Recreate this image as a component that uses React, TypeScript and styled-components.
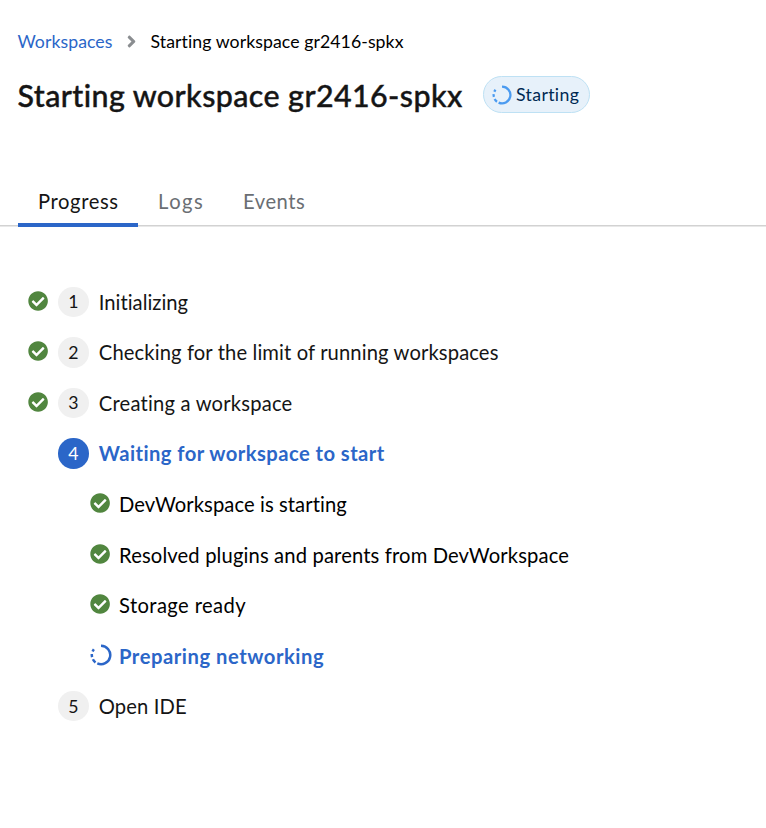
import React from 'react';
import styled, { createGlobalStyle } from 'styled-components';
import { FaAngleRight, FaCheckCircle } from 'react-icons/fa';

const GlobalStyle = createGlobalStyle`
  *, *::before, *::after { box-sizing: border-box; }
  html { background: #fff; }
  body {
    margin: 0;
    font-family: Lato, 'Open Sans', sans-serif;
    font-variant-ligatures: none;
    color: #151515;
    overflow-x: hidden;
  }
`;

const Page = styled.main`
  min-height: 828px;
  background: #fff;
`;

const Header = styled.header`
  padding: 27px 17.5px 0;
`;

const Breadcrumb = styled.nav`
  display: flex;
  align-items: center;
  height: 28px;
  font-size: 17.7px;
  white-space: nowrap;
`;

const BreadcrumbLink = styled.a`
  width: 95px;
  color: #2b66c8;
  letter-spacing: 0.05px;
  text-decoration: none;
`;

const Divider = styled(FaAngleRight)`
  width: 19px;
  height: 19px;
  margin: 0 10px 0 9px;
  color: #8a8d90;
`;

const BreadcrumbCurrent = styled.span`
  color: #000;
  letter-spacing: 0.07px;
`;

const TitleRow = styled.div`
  display: flex;
  align-items: center;
  height: 37px;
  margin-top: 21px;
`;

const Title = styled.h1`
  width: 465.5px;
  margin: 0;
  font-size: 30.4px;
  font-weight: 500;
  line-height: 38px;
  letter-spacing: 0.41px;
  white-space: nowrap;
  -webkit-text-stroke: 0.4px currentColor;
`;

const StatusLabel = styled.span`
  display: flex;
  align-items: center;
  gap: 4px;
  width: 107px;
  height: 37px;
  padding-left: 8px;
  border: 1.25px solid #bee1f4;
  border-radius: 19px;
  background: #e7f1fa;
  color: #002952;
  font-size: 17.7px;
  letter-spacing: 0.35px;
`;

const Tabs = styled.div`
  display: flex;
  height: 53px;
  margin-top: 60px;
  padding: 0 0 0 18px;
  border-bottom: 1px solid #d2d2d2;
  box-shadow: 0 1px 0 #e8e8e8;
`;

const Tab = styled.button<{ $active?: boolean; $width: number; $spacing: number }>`
  position: relative;
  width: ${(p) => p.$width}px;
  height: 53.5px;
  padding: 6px 0 0 20px;
  border: 0;
  border-bottom: 4px solid ${(p) => (p.$active ? '#2b66c8' : 'transparent')};
  background: none;
  color: ${(p) => (p.$active ? '#151515' : '#6a6e73')};
  font: 400 20.2px/44px Lato, sans-serif;
  letter-spacing: ${(p) => p.$spacing}px;
  text-align: left;
  white-space: nowrap;
`;

const Steps = styled.ol`
  margin: 0;
  padding: 50.5px 0 0 28px;
  list-style: none;
`;

const Step = styled.li<{ $nested?: boolean }>`
  display: flex;
  align-items: center;
  height: 50.55px;
  padding-left: ${(p) => (p.$nested ? 62 : 0)}px;
`;

const StatusSlot = styled.span<{ $nested?: boolean }>`
  display: flex;
  flex: none;
  width: ${(p) => (p.$nested ? 29 : 30.3)}px;
  margin-top: -1.6px;
`;

const CheckIcon = styled(FaCheckCircle)`
  width: 20.2px;
  height: 20.2px;
  color: #51863f;
`;

const Bullet = styled.span<{ $active?: boolean }>`
  display: flex;
  flex: none;
  align-items: center;
  justify-content: center;
  width: 30.4px;
  height: 30.4px;
  margin-right: 10.1px;
  border-radius: 50%;
  background: ${(p) => (p.$active ? '#2b66c8' : '#f0f0f0')};
  color: ${(p) => (p.$active ? '#fff' : '#151515')};
  font-size: 17.7px;
`;

const StepText = styled.span<{ $active?: boolean; $nested?: boolean; $spacing: number }>`
  color: ${(p) => (p.$active ? '#2b66c8' : p.$nested ? '#000' : '#151515')};
  font-size: 20.2px;
  font-weight: ${(p) => (p.$active ? 700 : 400)};
  letter-spacing: ${(p) => p.$spacing}px;
  white-space: nowrap;
`;

const SpinnerSvg = styled.svg<{ $size: number; $color: string }>`
  flex: none;
  width: ${(p) => p.$size}px;
  height: ${(p) => p.$size}px;
  fill: none;
  stroke: ${(p) => p.$color};
  stroke-width: 2.5;
`;

function Spinner({ size, color }: { size: number; color: string }) {
  return (
    <SpinnerSvg viewBox="0 0 22 22" $size={size} $color={color} aria-hidden="true">
      <path d="M11 1.8A9.2 9.2 0 1 1 7.3 19.4" />
      <path d="M5.5 18.4A9.2 9.2 0 0 1 2.9 15.3" />
      <path d="M2.1 13.1A9.2 9.2 0 0 1 1.8 10" />
      <path d="M2.6 7.4A9.2 9.2 0 0 1 3.9 5.2" />
    </SpinnerSvg>
  );
}

interface StepData {
  text: string;
  spacing: number;
  number?: number;
  done?: boolean;
  active?: boolean;
}

const steps: StepData[] = [
  { number: 1, text: 'Initializing', spacing: 0.02, done: true },
  { number: 2, text: 'Checking for the limit of running workspaces', spacing: 0.12, done: true },
  { number: 3, text: 'Creating a workspace', spacing: 0.2, done: true },
  { number: 4, text: 'Waiting for workspace to start', spacing: 0.45, active: true },
  { text: 'DevWorkspace is starting', spacing: 0.08, done: true },
  { text: 'Resolved plugins and parents from DevWorkspace', spacing: 0.14, done: true },
  { text: 'Storage ready', spacing: 0.4, done: true },
  { text: 'Preparing networking', spacing: 0.54, active: true },
  { number: 5, text: 'Open IDE', spacing: 0.12 },
];

export default function App() {
  return (
    <Page>
      <GlobalStyle />
      <Header>
        <Breadcrumb aria-label="Breadcrumb">
          <BreadcrumbLink>Workspaces</BreadcrumbLink>
          <Divider />
          <BreadcrumbCurrent>Starting workspace gr2416-spkx</BreadcrumbCurrent>
        </Breadcrumb>
        <TitleRow>
          <Title>Starting workspace gr2416-spkx</Title>
          <StatusLabel>
            <Spinner size={20} color="#4b9bf0" />
            Starting
          </StatusLabel>
        </TitleRow>
      </Header>
      <Tabs role="tablist">
        <Tab role="tab" $active $width={120} $spacing={0.6}>Progress</Tab>
        <Tab role="tab" $width={85} $spacing={1.5}>Logs</Tab>
        <Tab role="tab" $width={101} $spacing={0.53}>Events</Tab>
      </Tabs>
      <Steps>
        {steps.map((step) => {
          const nested = step.number === undefined;
          return (
            <Step key={step.text} $nested={nested}>
              <StatusSlot $nested={nested}>
                {step.done && <CheckIcon />}
                {nested && step.active && <Spinner size={22} color="#2b66c8" />}
              </StatusSlot>
              {!nested && <Bullet $active={step.active}>{step.number}</Bullet>}
              <StepText $active={step.active} $nested={nested} $spacing={step.spacing}>
                {step.text}
              </StepText>
            </Step>
          );
        })}
      </Steps>
    </Page>
  );
}
